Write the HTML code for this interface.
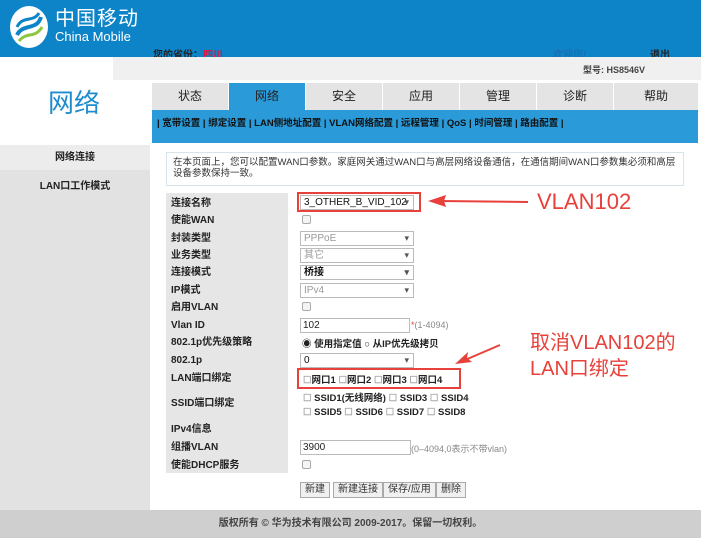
<!DOCTYPE html>
<html><head><meta charset="utf-8"><style>
*{margin:0;padding:0;box-sizing:border-box}
body{width:701px;height:538px;position:relative;background:#fff;font-family:"Liberation Sans","Noto Sans CJK SC",sans-serif;font-size:10px;color:#222;overflow:hidden}
.a{position:absolute}
.b{font-weight:bold}
.tab{position:absolute;top:83px;height:27px;width:76px;background:#e4e4e4;text-align:center;line-height:27px;font-size:12px;color:#222}
.lbl{position:absolute;left:171px;font-weight:bold;font-size:10px;line-height:12px;color:#222}
.sel{position:absolute;left:300px;width:114px;height:15px;border:1px solid #bbb;background:#fff;font-size:10px;line-height:13px;padding-left:3px;color:#999}
.sel:after{content:"▾";position:absolute;right:4px;top:0;font-size:9px;color:#555}
.cb{position:absolute;width:9px;height:9px;border:1px solid #aaa;border-radius:2px;background:#f4f4f4}
.btn{position:absolute;top:482px;height:16px;border:1px solid #aaa;background:#f0f0f0;font-size:10px;line-height:14px;padding:0 4px;color:#333}
.red{color:#e8403a}
</style></head><body>
<div class="a" style="left:0;top:0;width:701px;height:57px;background:#0d84c8"></div>
<svg class="a" style="left:9px;top:5px" width="40" height="44" viewBox="0 0 40 44"><ellipse cx="20" cy="22" rx="19" ry="21" fill="#fff"/><path d="M8 30 C14 18 28 26 32 12" stroke="#0d84c8" stroke-width="4" fill="none"/><path d="M8 22 C14 10 24 18 30 8" stroke="#0d84c8" stroke-width="3" fill="none"/><path d="M10 36 C18 26 26 34 33 22" stroke="#8cc63f" stroke-width="3" fill="none"/></svg>
<div class="a" style="left:55px;top:8px;color:#fff;font-size:20px;line-height:22px;letter-spacing:1px">中国移动</div>
<div class="a" style="left:55px;top:30px;color:#fff;font-size:13px;line-height:14px">China Mobile</div>
<div class="a b" style="left:153px;top:46px;font-size:10px;color:#222">您的省份：<span style="color:#e0163a">四川</span></div>
<div class="a b" style="left:553px;top:46px;font-size:10px;color:#1a6fb0">欢迎您!</div>
<div class="a b" style="left:650px;top:46px;font-size:10px;color:#222">退出</div>
<div class="a" style="left:113px;top:57px;width:588px;height:23px;background:#f0f0f0"></div>
<div class="a b" style="left:583px;top:63px;font-size:9px;color:#444">型号: HS8546V</div>
<div class="a" style="left:48px;top:83px;font-size:26px;color:#1e8ccf">网络</div>
<div class="tab" style="left:152px">状态</div>
<div class="tab" style="left:229px;background:#2a9ad8;color:#222">网络</div>
<div class="tab" style="left:306px">安全</div>
<div class="tab" style="left:383px">应用</div>
<div class="tab" style="left:460px">管理</div>
<div class="tab" style="left:537px">诊断</div>
<div class="tab" style="left:614px;width:84px">帮助</div>
<div class="a" style="left:152px;top:110px;width:546px;height:33px;background:#2a9ad8"></div>
<div class="a b" style="left:157px;top:115px;font-size:9.5px;color:#111;white-space:nowrap">| 宽带设置 | 绑定设置 | LAN侧地址配置 | VLAN网络配置 | 远程管理 | QoS | 时间管理 | 路由配置 |</div>
<div class="a" style="left:0;top:145px;width:150px;height:365px;background:#e2e2e2"></div>
<div class="a b" style="left:0;top:145px;width:150px;height:25px;background:#ececec;text-align:center;line-height:25px;font-size:10px">网络连接</div>
<div class="a b" style="left:0;top:177px;width:150px;text-align:center;font-size:10px">LAN口工作模式</div>
<div class="a" style="left:166px;top:152px;width:518px;height:34px;border:1px solid #d8e4ea;padding:4px 6px;font-size:9.5px;line-height:11px;color:#333">在本页面上，您可以配置WAN口参数。家庭网关通过WAN口与高层网络设备通信，在通信期间WAN口参数集必须和高层设备参数保持一致。</div>
<div class="a" style="left:166px;top:193px;width:122px;height:280px;background:#e6e6e6"></div>
<div class="lbl" style="top:198px">连接名称</div>
<div class="lbl" style="top:215px">使能WAN</div>
<div class="lbl" style="top:233px">封装类型</div>
<div class="lbl" style="top:250px">业务类型</div>
<div class="lbl" style="top:267px">连接模式</div>
<div class="lbl" style="top:285px">IP模式</div>
<div class="lbl" style="top:302px">启用VLAN</div>
<div class="lbl" style="top:320px">Vlan ID</div>
<div class="lbl" style="top:337px">802.1p优先级策略</div>
<div class="lbl" style="top:355px">802.1p</div>
<div class="lbl" style="top:373px">LAN端口绑定</div>
<div class="lbl" style="top:398px">SSID端口绑定</div>
<div class="lbl" style="top:424px">IPv4信息</div>
<div class="lbl" style="top:442px">组播VLAN</div>
<div class="lbl" style="top:460px">使能DHCP服务</div>
<div class="sel" style="top:195px;color:#111">3_OTHER_B_VID_102</div>
<div class="a" style="left:297px;top:192px;width:124px;height:20px;border:2px solid #e8403a"></div>
<div class="cb" style="left:302px;top:215px"></div>
<div class="sel" style="top:231px">PPPoE</div>
<div class="sel" style="top:248px">其它</div>
<div class="sel" style="top:265px;color:#111;font-weight:bold">桥接</div>
<div class="sel" style="top:283px">IPv4</div>
<div class="cb" style="left:302px;top:302px"></div>
<div class="a" style="left:300px;top:318px;width:110px;height:15px;border:1px solid #bbb;font-size:10px;line-height:13px;padding-left:2px">102</div>
<div class="a" style="left:411px;top:320px;font-size:9px;color:#888"><span class="red">*</span>(1-4094)</div>
<div class="a b" style="left:302px;top:336px;font-size:9.5px">◉ 使用指定值 ○ 从IP优先级拷贝</div>
<div class="sel" style="top:353px;color:#111">0</div>
<div class="a b" style="left:303px;top:372px;font-size:9.5px;white-space:nowrap"><span style="color:#aaa">☐</span>网口1 <span style="color:#aaa">☐</span>网口2 <span style="color:#aaa">☐</span>网口3 <span style="color:#aaa">☐</span>网口4</div>
<div class="a" style="left:297px;top:368px;width:164px;height:21px;border:2px solid #e8403a"></div>
<div class="a b" style="left:303px;top:390px;font-size:9.5px;white-space:nowrap"><span style="color:#aaa">☐</span> SSID1(无线网络) <span style="color:#aaa">☐</span> SSID3 <span style="color:#aaa">☐</span> SSID4</div>
<div class="a b" style="left:303px;top:407px;font-size:9.5px;white-space:nowrap"><span style="color:#aaa">☐</span> SSID5 <span style="color:#aaa">☐</span> SSID6 <span style="color:#aaa">☐</span> SSID7 <span style="color:#aaa">☐</span> SSID8</div>
<div class="a" style="left:300px;top:440px;width:111px;height:15px;border:1px solid #bbb;font-size:10px;line-height:13px;padding-left:2px">3900</div>
<div class="a" style="left:411px;top:442px;font-size:9px;color:#888">(0–4094,0表示不带vlan)</div>
<div class="cb" style="left:302px;top:460px"></div>
<div class="btn" style="left:300px">新建</div>
<div class="btn" style="left:333px">新建连接</div>
<div class="btn" style="left:383px">保存/应用</div>
<div class="btn" style="left:436px">删除</div>
<svg class="a" style="left:0;top:0" width="701" height="538"><path d="M528 202 L440 201" stroke="#e8403a" stroke-width="2"/><path d="M428 201 L446 195 L444 201 L446 207 Z" fill="#e8403a"/><path d="M500 345 L465 360" stroke="#e8403a" stroke-width="2"/><path d="M455 364 L468 352 L467 358 L472 362 Z" fill="#e8403a"/></svg>
<div class="a red" style="left:537px;top:189px;font-size:22px;line-height:26px">VLAN102</div>
<div class="a red" style="left:530px;top:330px;font-size:20px;line-height:26px">取消VLAN102的<br>LAN口绑定</div>
<div class="a" style="left:0;top:510px;width:701px;height:28px;background:#cfcfcf;text-align:center;line-height:28px;font-size:10px;color:#444;font-weight:bold">版权所有 © 华为技术有限公司 2009-2017。保留一切权利。</div>
</body></html>
